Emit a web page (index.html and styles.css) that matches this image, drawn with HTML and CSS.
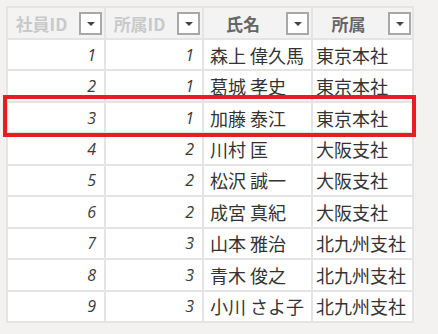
FILE: index.html
```html
<!DOCTYPE html>
<html lang="ja">
<head>
<meta charset="utf-8">
<title>社員テーブル</title>
<link rel="stylesheet" href="styles.css">
</head>
<body>
<div class="wrap">
  <div class="grid">
    <div class="hcell dim"><span class="hlabel">社員ID</span><span class="dd"><svg width="8" height="4" viewBox="0 0 8 4"><polygon points="0,0 8,0 4,4" fill="#444"/></svg></span></div>
    <div class="hcell dim"><span class="hlabel">所属ID</span><span class="dd"><svg width="8" height="4" viewBox="0 0 8 4"><polygon points="0,0 8,0 4,4" fill="#444"/></svg></span></div>
    <div class="hcell"><span class="hlabel">氏名</span><span class="dd"><svg width="8" height="4" viewBox="0 0 8 4"><polygon points="0,0 8,0 4,4" fill="#444"/></svg></span></div>
    <div class="hcell last"><span class="hlabel">所属</span><span class="dd"><svg width="8" height="4" viewBox="0 0 8 4"><polygon points="0,0 8,0 4,4" fill="#444"/></svg></span></div>

    <div class="num">1</div><div class="num">1</div><div class="txt">森上 偉久馬</div><div class="txt t4">東京本社</div>
    <div class="num">2</div><div class="num">1</div><div class="txt">葛城 孝史</div><div class="txt t4">東京本社</div>
    <div class="num">3</div><div class="num">1</div><div class="txt">加藤 泰江</div><div class="txt t4">東京本社</div>
    <div class="num">4</div><div class="num">2</div><div class="txt">川村 匡</div><div class="txt t4">大阪支社</div>
    <div class="num">5</div><div class="num">2</div><div class="txt">松沢 誠一</div><div class="txt t4">大阪支社</div>
    <div class="num">6</div><div class="num">2</div><div class="txt">成宮 真紀</div><div class="txt t4">大阪支社</div>
    <div class="num">7</div><div class="num">3</div><div class="txt">山本 雅治</div><div class="txt t4">北九州支社</div>
    <div class="num">8</div><div class="num">3</div><div class="txt">青木 俊之</div><div class="txt t4">北九州支社</div>
    <div class="num">9</div><div class="num">3</div><div class="txt">小川 さよ子</div><div class="txt t4">北九州支社</div>
  </div>
  <div class="highlight"></div>
</div>
</body>
</html>
```
FILE: styles.css
```css
html, body {
  margin: 0;
  padding: 0;
  background: #f3f2f1;
}
body {
  font-family: "Noto Sans CJK JP", "Noto Sans", sans-serif;
  width: 438px;
  height: 334px;
  overflow: hidden;
}
.wrap {
  position: relative;
  margin: 6px 0 0 6px;
  width: 408px;
}
.grid {
  display: grid;
  grid-template-columns: 96px 96px 107px 99px;
  grid-template-rows: 30px repeat(9, 29.44px);
  gap: 2px;
  padding: 2px;
  background: #e4e4e4;
  width: max-content;
}
.hcell {
  background: #f3f3f3;
  display: flex;
  align-items: center;
  padding-right: 2px;
  color: #666;
  font-weight: bold;
  font-size: 17px;
}
.hcell.last {
  padding-right: 1px;
}
.hcell.dim {
  color: #c9c9c9;
}
.hlabel {
  flex: 1;
  text-align: center;
  line-height: 1;
  padding-right: 4px;
}
.dd {
  width: 23px;
  height: 23px;
  box-sizing: border-box;
  border: 2px solid #a8a8a8;
  background: #fff;
  display: flex;
  align-items: center;
  justify-content: center;
  margin-top: 1px;
}
.num {
  background: #fff;
  display: flex;
  align-items: center;
  justify-content: flex-end;
  padding-right: 8px;
  font-family: "Open Sans", "Noto Sans", sans-serif;
  font-style: italic;
  font-size: 16px;
  color: #3a3a3a;
}
.txt {
  background: #fff;
  display: flex;
  align-items: center;
  padding-left: 6px;
  font-size: 18px;
  color: #333;
  white-space: nowrap;
}
.txt.t4 {
  padding-left: 3px;
}
.highlight {
  position: absolute;
  left: -3px;
  top: 89px;
  width: 413px;
  height: 42px;
  box-sizing: border-box;
  border: 4.5px solid #e81c24;
}
```
